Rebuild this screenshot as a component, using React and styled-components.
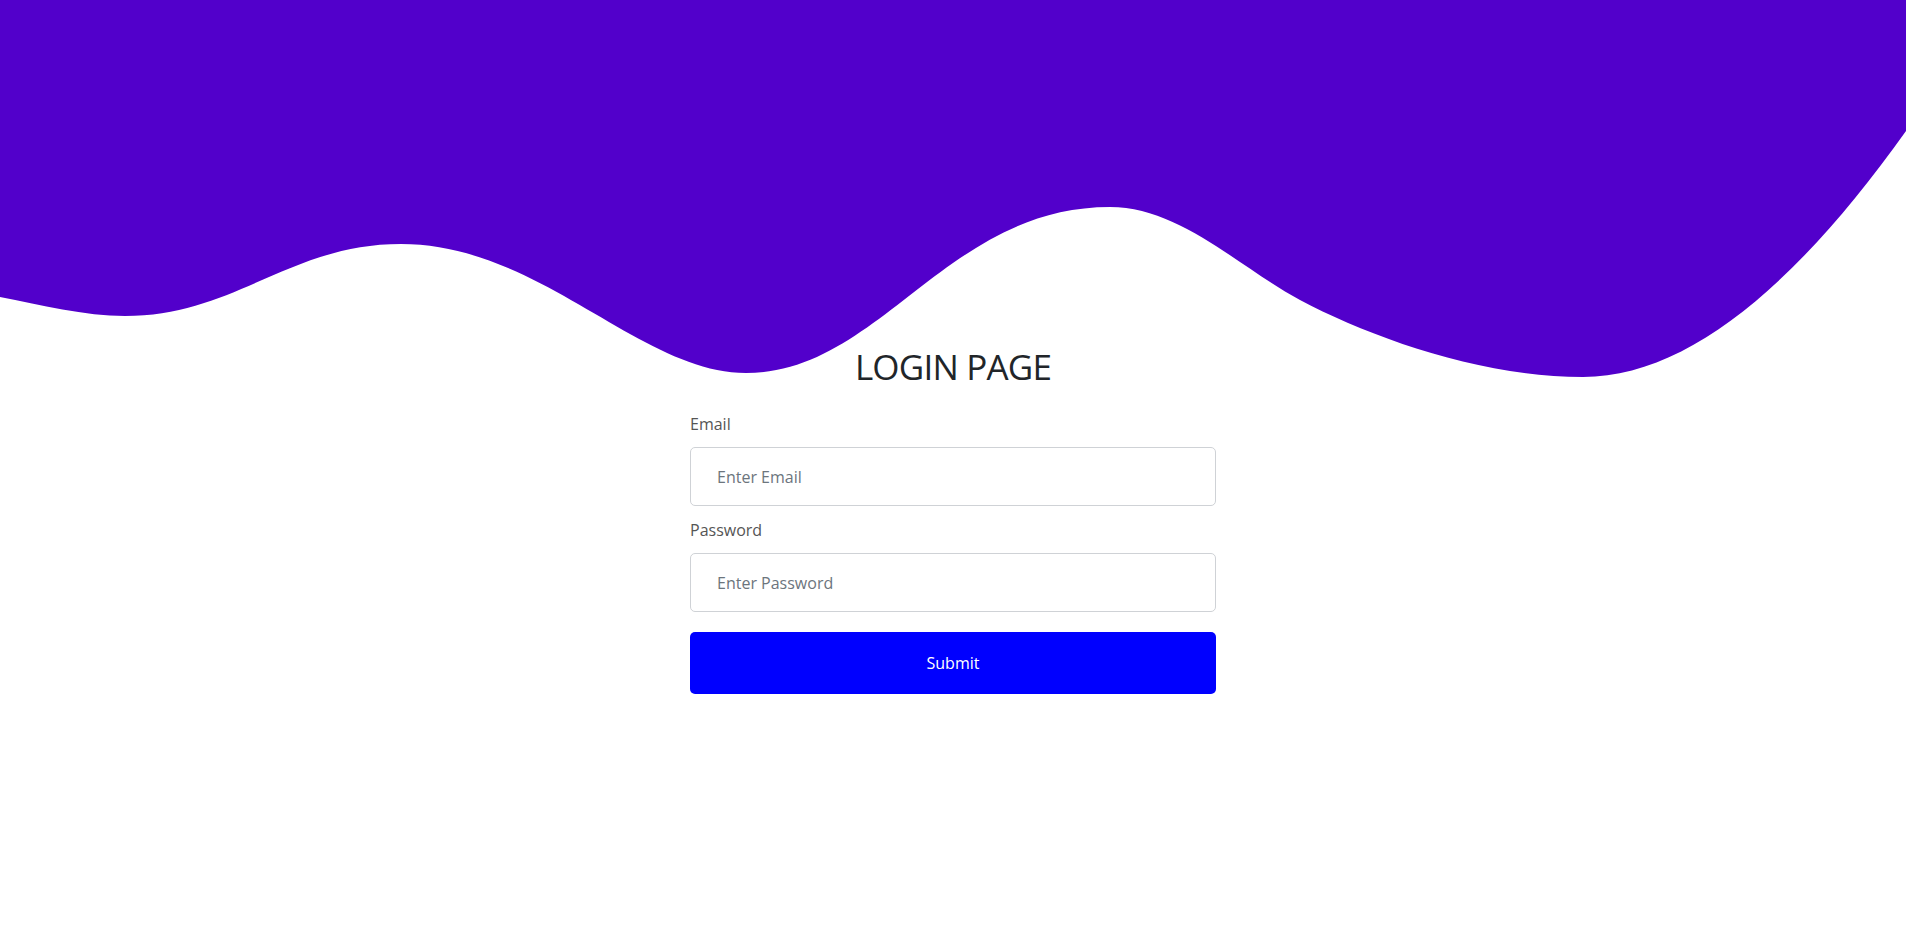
import React from "react"
import styled, { createGlobalStyle } from "styled-components"

const GlobalStyle = createGlobalStyle`
  html, body {
    margin: 0;
    padding: 0;
    background: #ffffff;
    font-family: "Open Sans", "Noto Sans", sans-serif;
    color: #212529;
  }
  * {
    box-sizing: border-box;
  }
`

const Page = styled.div`
  position: relative;
  min-height: 938px;
  overflow: hidden;
`

// decorative wave sitting behind the form
const Wave = styled.svg`
  position: absolute;
  top: 0;
  left: 0;
  width: 100%;
  height: 380px;
  z-index: 0;
`

const Content = styled.main`
  position: relative;
  z-index: 1;
  padding-top: 345px;
  display: flex;
  flex-direction: column;
  align-items: center;
`

const Title = styled.h2`
  margin: 0 0 23px;
  font-size: 35px;
  line-height: 44px;
  font-weight: 400;
  letter-spacing: -0.8px;
  color: #212529;
`

const Form = styled.form`
  width: 526px;
  display: flex;
  flex-direction: column;
`

const Field = styled.div`
  display: flex;
  flex-direction: column;
  margin-bottom: 12px;
`

const Label = styled.label`
  font-size: 16px;
  line-height: 24px;
  color: #555555;
  margin-bottom: 11px;
`

const Input = styled.input`
  height: 59px;
  width: 100%;
  padding: 0 26px;
  border: 1px solid #cfd2d6;
  border-radius: 5px;
  font-family: inherit;
  font-size: 16px;
  color: #212529;
  outline: none;
  &::placeholder {
    color: #6c757d;
  }
`

const Button = styled.button`
  margin-top: 8px;
  height: 62px;
  width: 100%;
  border: none;
  border-radius: 5px;
  background: #0000ff;
  color: #ffffff;
  font-family: inherit;
  font-size: 16px;
  cursor: pointer;
`

const App = () => (
  <Page>
    <GlobalStyle />
    <Wave viewBox="0 0 1906 380" preserveAspectRatio="none">
      <path
        fill="#5200cb"
        d="M0,297 C40,305 85,316 125,316 C235,316 289,244 401,244 C540,244 640,373 746,373 C880,373 946,207 1110,207 C1180,207 1240,268 1300,300 C1370,337 1480,377 1583,377 C1690,377 1800,280 1906,131 L1906,0 L0,0 Z"
      />
    </Wave>
    <Content>
      <Title>LOGIN PAGE</Title>
      <Form onSubmit={e => e.preventDefault()}>
        <Field>
          <Label htmlFor="email">Email</Label>
          <Input id="email" type="email" placeholder="Enter Email" />
        </Field>
        <Field>
          <Label htmlFor="password">Password</Label>
          <Input id="password" type="password" placeholder="Enter Password" />
        </Field>
        <Button type="submit">Submit</Button>
      </Form>
    </Content>
  </Page>
)

export default App
